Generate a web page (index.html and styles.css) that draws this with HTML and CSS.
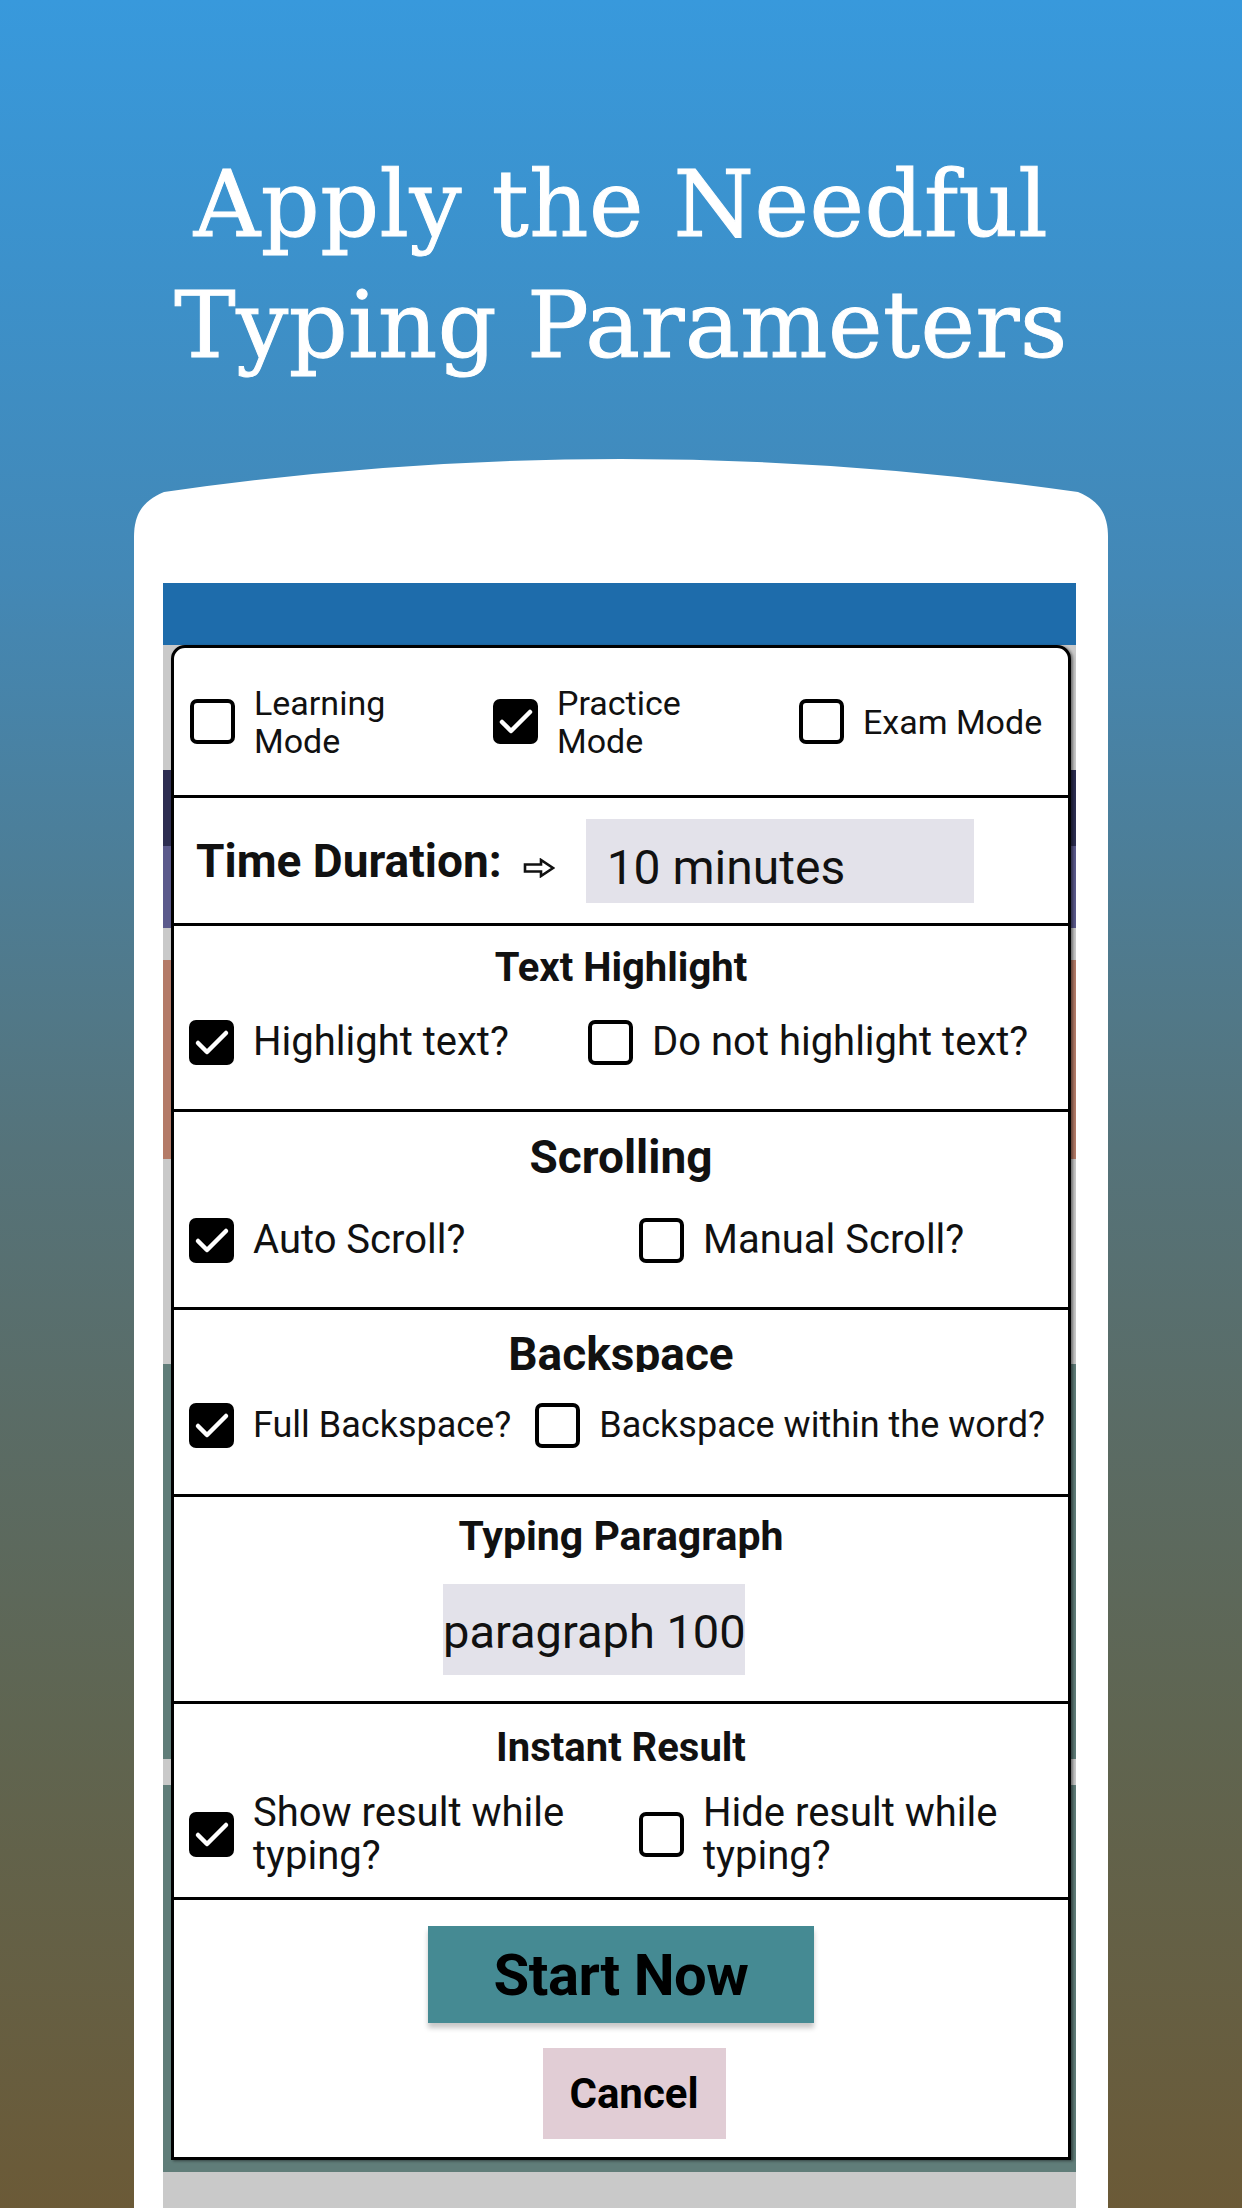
FILE: index.html
```html
<!DOCTYPE html>
<html lang="en">
<head>
<meta charset="utf-8">
<title>Apply the Needful Typing Parameters</title>
<link rel="stylesheet" href="styles.css">
</head>
<body>
<div class="page">
  <h1 class="headline">Apply the Needful<br>Typing Parameters</h1>

  <div class="phone">
    <svg class="phone-cap" width="974" height="86" viewBox="0 0 974 86" aria-hidden="true">
      <path d="M0,86 L0,80 C0,58 8,44 30,35 Q487,-31 944,35 C966,44 974,58 974,80 L974,86 Z" fill="#ffffff"/>
    </svg>
    <div class="phone-body">
      <div class="screen">
        <div class="appbar"></div>
        <div class="backdrop">
          <div class="strip st-grey h125"></div>
          <div class="strip st-navy h76"></div>
          <div class="strip st-purple h82"></div>
          <div class="strip st-grey h32"></div>
          <div class="strip st-salmon h199"></div>
          <div class="strip st-grey h205"></div>
          <div class="strip st-teal h395"></div>
          <div class="strip st-grey h26"></div>
          <div class="strip st-teal h387"></div>
          <div class="strip st-grey h80"></div>
        </div>

        <div class="dialog">
          <section class="sec sec-modes">
            <div class="opt">
              <span class="box"></span>
              <span class="lbl lbl-sm">Learning<br>Mode</span>
            </div>
            <div class="opt">
              <span class="box checked"><svg viewBox="0 0 45 45" aria-hidden="true"><path d="M9 23 L18 32 L37 13" /></svg></span>
              <span class="lbl lbl-sm">Practice<br>Mode</span>
            </div>
            <div class="opt">
              <span class="box"></span>
              <span class="lbl lbl-sm">Exam Mode</span>
            </div>
          </section>

          <section class="sec sec-time">
            <span class="time-label">Time Duration:</span>
            <svg class="arrow" width="32" height="20" viewBox="0 0 32 20" aria-hidden="true">
              <path d="M2 6.5 H18 V2 L30 10 L18 18 V13.5 H2 Z" />
            </svg>
            <div class="field time-field">10 minutes</div>
          </section>

          <section class="sec sec-highlight">
            <h2 class="sec-title title-md">Text Highlight</h2>
            <div class="opts cols-highlight">
              <div class="opt">
                <span class="box checked"><svg viewBox="0 0 45 45" aria-hidden="true"><path d="M9 23 L18 32 L37 13" /></svg></span>
                <span class="lbl lbl-lg">Highlight text?</span>
              </div>
              <div class="opt">
                <span class="box"></span>
                <span class="lbl lbl-lg">Do not highlight text?</span>
              </div>
            </div>
          </section>

          <section class="sec sec-scroll">
            <h2 class="sec-title title-lg">Scrolling</h2>
            <div class="opts cols-half">
              <div class="opt">
                <span class="box checked"><svg viewBox="0 0 45 45" aria-hidden="true"><path d="M9 23 L18 32 L37 13" /></svg></span>
                <span class="lbl lbl-lg">Auto Scroll?</span>
              </div>
              <div class="opt">
                <span class="box"></span>
                <span class="lbl lbl-lg">Manual Scroll?</span>
              </div>
            </div>
          </section>

          <section class="sec sec-backspace">
            <h2 class="sec-title title-lg title-clip">Backspace</h2>
            <div class="opts opts-flow">
              <div class="opt">
                <span class="box checked"><svg viewBox="0 0 45 45" aria-hidden="true"><path d="M9 23 L18 32 L37 13" /></svg></span>
                <span class="lbl lbl-md">Full Backspace?</span>
              </div>
              <div class="opt opt-next">
                <span class="box"></span>
                <span class="lbl lbl-md">Backspace within the word?</span>
              </div>
            </div>
          </section>

          <section class="sec sec-paragraph">
            <h2 class="sec-title title-mid">Typing Paragraph</h2>
            <div class="field para-field">paragraph 100</div>
          </section>

          <section class="sec sec-result">
            <h2 class="sec-title title-md">Instant Result</h2>
            <div class="opts cols-half">
              <div class="opt">
                <span class="box checked"><svg viewBox="0 0 45 45" aria-hidden="true"><path d="M9 23 L18 32 L37 13" /></svg></span>
                <span class="lbl lbl-two">Show result while<br>typing?</span>
              </div>
              <div class="opt">
                <span class="box"></span>
                <span class="lbl lbl-two">Hide result while<br>typing?</span>
              </div>
            </div>
          </section>

          <section class="sec sec-actions">
            <button class="btn btn-start" type="button">Start Now</button>
            <button class="btn btn-cancel" type="button">Cancel</button>
          </section>
        </div>
      </div>
    </div>
  </div>
</div>
</body>
</html>
```

FILE: styles.css
```css
* { box-sizing: border-box; }

html, body {
  margin: 0;
  padding: 0;
}

body {
  width: 1242px;
  height: 2208px;
  overflow: hidden;
  background: linear-gradient(to bottom,
    #3899dc 0%,
    #3c91cb 12%,
    #4388b6 26%,
    #4d7d95 40%,
    #55737a 52%,
    #5a6c66 64%,
    #5f6551 78%,
    #6b5a37 100%);
  font-family: Roboto, "Liberation Sans", Arial, sans-serif;
  color: #111;
}

.page {
  width: 1242px;
  height: 2208px;
  display: flex;
  flex-direction: column;
  align-items: center;
}

.headline {
  margin: 144px 0 0 0;
  font-family: "DejaVu Serif", "Liberation Serif", serif;
  font-weight: normal;
  font-size: 92px;
  line-height: 121px;
  color: #ffffff;
  text-align: center;
  letter-spacing: 0.5px;
  -webkit-text-stroke: 1px #ffffff;
}

.phone {
  margin-top: 71px;
  width: 974px;
  flex: 1;
  display: flex;
  flex-direction: column;
}

.phone-cap {
  display: block;
  flex: none;
}

.phone-body {
  flex: 1;
  background: #ffffff;
  padding: 40px 32px 0 29px;
}

.screen {
  position: relative;
  width: 913px;
  height: 100%;
}

.appbar {
  height: 62px;
  background: #1e6cab;
}

.backdrop { display: flex; flex-direction: column; }
.strip { width: 100%; }
.st-grey { background: #c9c9c9; }
.st-navy { background: #2d2e52; }
.st-purple { background: #5b5a8c; }
.st-salmon { background: #b47b68; }
.st-teal { background: #607d79; }
.h125 { height: 125px; }
.h76 { height: 76px; }
.h82 { height: 82px; }
.h32 { height: 32px; }
.h199 { height: 199px; }
.h205 { height: 205px; }
.h395 { height: 395px; }
.h26 { height: 26px; }
.h387 { height: 387px; }
.h80 { height: 80px; }

/* dialog overlay */
.dialog {
  position: absolute;
  top: 62px;
  left: 8px;
  width: 900px;
  height: 1515px;
  background: #ffffff;
  border: 3px solid #000;
  border-radius: 14px 14px 0 0;
  box-shadow: 2px 1px 3px rgba(0, 0, 0, 0.45);
  display: flex;
  flex-direction: column;
}

.sec {
  border-bottom: 3px solid #000;
  flex: none;
}

.sec-modes { height: 150px; }
.sec-time { height: 128px; }
.sec-highlight { height: 186px; }
.sec-scroll { height: 198px; }
.sec-backspace { height: 187px; }
.sec-paragraph { height: 207px; }
.sec-result { height: 196px; }
.sec-actions { height: 257px; border-bottom: none; }

.sec-title {
  margin: 0;
  text-align: center;
  font-weight: 700;
  color: #111;
}
.title-md { font-size: 40px; line-height: 46px; }
.title-mid { font-size: 41px; line-height: 46px; }
.title-lg { font-size: 46px; line-height: 52px; }
.title-clip { height: 44px; overflow: hidden; }

/* checkbox option */
.opt {
  display: flex;
  align-items: center;
  gap: 19px;
}

.box {
  flex: none;
  width: 45px;
  height: 45px;
  border: 4px solid #000;
  border-radius: 7px;
  background: #fff;
  display: flex;
  align-items: center;
  justify-content: center;
}

.box.checked {
  background: #000;
  border: none;
}

.box svg {
  width: 45px;
  height: 45px;
  display: block;
}

.box svg path {
  fill: none;
  stroke: #fff;
  stroke-width: 4.5;
  stroke-linecap: round;
  stroke-linejoin: round;
}

.lbl { color: #111; white-space: nowrap; }
.lbl-sm { font-size: 34px; line-height: 38px; }
.lbl-md { font-size: 36px; line-height: 43px; }
.lbl-lg { font-size: 40px; line-height: 46px; }
.lbl-two { font-size: 40px; line-height: 43px; }

/* section 1 */
.sec-modes {
  display: grid;
  grid-template-columns: 303px 306px 1fr;
  align-items: center;
  padding-left: 16px;
}

/* section 2 */
.sec-time {
  display: flex;
  align-items: center;
  padding-left: 22px;
}

.time-label {
  font-size: 46px;
  line-height: 52px;
  font-weight: 700;
  letter-spacing: 0;
}

.arrow {
  flex: none;
  margin: 14px 0 0 21px;
}
.arrow path {
  fill: none;
  stroke: #111;
  stroke-width: 2.6;
  stroke-linejoin: miter;
}

.field {
  background: #e3e2ea;
  color: #111;
  white-space: nowrap;
}

.time-field {
  margin-left: 31px;
  width: 388px;
  height: 84px;
  padding: 19px 0 0 21px;
  font-size: 48px;
  line-height: 60px;
}

/* rows */
.opts { padding-left: 15px; }
.cols-highlight { display: grid; grid-template-columns: 399px 1fr; }
.cols-half { display: grid; grid-template-columns: 450px 1fr; }
.opts-flow { display: flex; }
.opt-next { margin-left: 24px; }

.sec-highlight { padding-top: 19px; }
.sec-highlight .opts { margin-top: 28px; }

.sec-scroll { padding-top: 19px; }
.sec-scroll .opts { margin-top: 34px; }

.sec-backspace { padding-top: 18px; }
.sec-backspace .opts { margin-top: 31px; }

.sec-paragraph { padding-top: 16px; }
.para-field {
  margin: 25px 0 0 269px;
  width: 302px;
  height: 91px;
  padding-top: 18px;
  font-size: 47px;
  line-height: 60px;
}

.sec-result { padding-top: 21px; }
.sec-result .opts { margin-top: 20px; }

/* actions */
.sec-actions {
  display: flex;
  flex-direction: column;
  align-items: center;
  padding-top: 26px;
}

.btn {
  border: none;
  padding: 0;
  margin: 0;
  font-family: Roboto, "Liberation Sans", Arial, sans-serif;
  font-weight: 700;
  color: #000;
  cursor: pointer;
}

.btn-start {
  width: 386px;
  height: 97px;
  background: #458a93;
  font-size: 58px;
  letter-spacing: -0.5px;
  box-shadow: 0 5px 5px rgba(0, 0, 0, 0.22);
}

.btn-cancel {
  margin-top: 25px;
  margin-left: 26px;
  width: 183px;
  height: 91px;
  background: #e1cdd5;
  font-size: 42px;
}
```
